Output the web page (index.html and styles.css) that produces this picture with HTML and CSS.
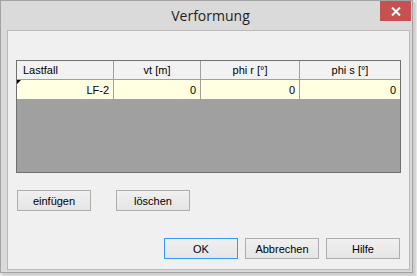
FILE: index.html
```html
<!DOCTYPE html>
<html>
<head>
<meta charset="utf-8">
<link rel="stylesheet" href="styles.css">
</head>
<body>
<div class="window">
  <div class="titlebar">
    <span class="title">Verformung</span>
    <div class="close">
      <svg width="10" height="9" viewBox="0 0 10 9"><path d="M1 0.5 L9 8.5 M9 0.5 L1 8.5" stroke="#fff" stroke-width="2" fill="none"/></svg>
    </div>
  </div>
  <div class="client">
    <div class="grid">
      <div class="row head">
        <div class="cell c1 left">Lastfall</div>
        <div class="cell c2">vt [m]</div>
        <div class="cell c3">phi r [°]</div>
        <div class="cell c4">phi s [°]</div>
      </div>
      <div class="row data">
        <div class="cell c1"><span class="marker"></span>LF-2</div>
        <div class="cell c2">0</div>
        <div class="cell c3">0</div>
        <div class="cell c4">0</div>
      </div>
      <div class="empty"></div>
    </div>
    <div class="editbtns">
      <div class="btn">einfügen</div>
      <div class="btn">löschen</div>
    </div>
    <div class="dlgbtns">
      <div class="btn default">OK</div>
      <div class="btn">Abbrechen</div>
      <div class="btn">Hilfe</div>
    </div>
  </div>
</div>
</body>
</html>
```

FILE: styles.css
```css
html, body {
  margin: 0;
  padding: 0;
}
body {
  width: 417px;
  height: 276px;
  background: #e6e6e6;
  font-family: "Liberation Sans", Arial, sans-serif;
  font-size: 11px;
  color: #000;
  overflow: hidden;
}
.window {
  box-sizing: border-box;
  width: 413px;
  height: 273px;
  border: 1px solid #a3a3a3;
  background: #dadada;
  padding: 0 2px 2px 6px;
  display: flex;
  flex-direction: column;
  box-shadow: 2px 2px 0 #cfcfcf, 3px 3px 0 #d8d8d8;
}
.titlebar {
  height: 29px;
  position: relative;
  display: flex;
  justify-content: center;
  align-items: center;
}
.title {
  font-family: "Open Sans", sans-serif;
  font-size: 14px;
  color: #1e1e1e;
  margin-left: 4px;
  margin-top: -1px;
}
.close {
  position: absolute;
  right: -1px;
  top: 0;
  width: 31px;
  height: 20px;
  background: #c75050;
  display: flex;
  align-items: center;
  justify-content: center;
}
.client {
  flex: 1;
  border: 1px solid #b9b9b9;
  background: #f0f0f0;
  padding: 29px 8px 10px 8px;
  display: flex;
  flex-direction: column;
}
.grid {
  height: 113px;
  box-sizing: border-box;
  border: 1px solid #707070;
  display: flex;
  flex-direction: column;
  background: #a0a0a0;
}
.row {
  display: flex;
  box-sizing: border-box;
}
.head {
  height: 19px;
  background: #f2f2f2;
  border-bottom: 1px solid #a0a0a0;
}
.data {
  height: 20px;
  background: #ffffe1;
  border-bottom: 1px solid #a0a0a0;
}
.cell {
  box-sizing: border-box;
  border-right: 1px solid #a0a0a0;
  display: flex;
  align-items: center;
  padding: 0 3px;
  position: relative;
}
.head .cell {
  justify-content: center;
}
.head .cell.left {
  justify-content: flex-start;
  padding-left: 6px;
}
.data .cell {
  justify-content: flex-end;
  padding-right: 4px;
}
.c1 { width: 97px; }
.c2 { width: 87px; }
.c3 { width: 99px; }
.c4 { width: 100px; border-right: none; }
.marker {
  position: absolute;
  left: 0;
  top: 0;
  width: 0;
  height: 0;
  border-top: 4px solid #000;
  border-right: 4px solid transparent;
}
.empty {
  flex: 1;
}
.btn {
  box-sizing: border-box;
  width: 74px;
  height: 21px;
  border: 1px solid #adadad;
  background: linear-gradient(#f0f0f0, #e5e5e5);
  display: flex;
  align-items: center;
  justify-content: center;
}
.btn.default {
  border-color: #3399ff;
}
.editbtns {
  display: flex;
  gap: 25px;
  margin-top: 17px;
  padding-left: 1px;
}
.dlgbtns {
  margin-top: auto;
  display: flex;
  justify-content: flex-end;
  gap: 7px;
  padding-right: 1px;
}
```
